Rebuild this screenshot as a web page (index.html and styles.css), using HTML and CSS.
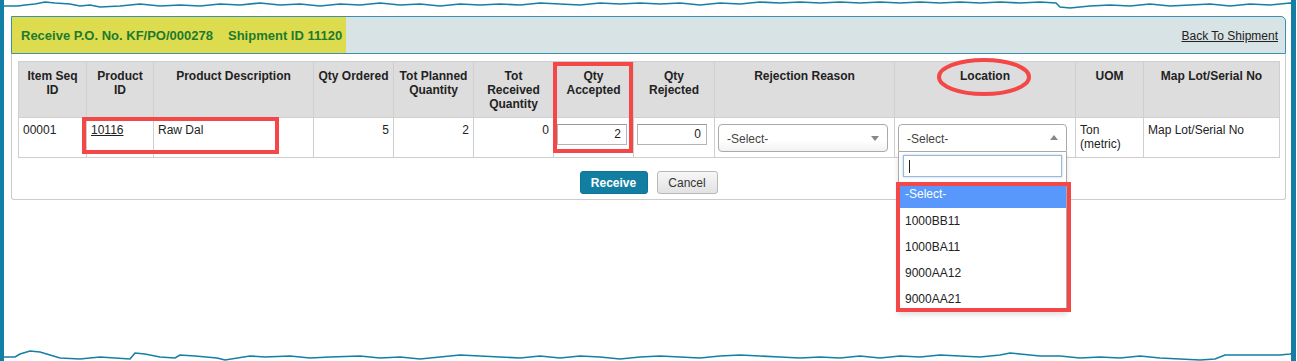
FILE: index.html
```html
<!DOCTYPE html>
<html>
<head>
<meta charset="utf-8">
<title>Receive P.O.</title>
<link rel="stylesheet" href="styles.css">
</head>
<body>
<div class="frame">
  <div class="panel">
    <div class="panel-head">
      <span class="title">Receive P.O. No. KF/PO/000278<span class="gap"></span>Shipment ID 11120</span>
      <a class="back" href="#">Back To Shipment</a>
    </div>
    <div class="panel-body">
      <table class="grid">
        <colgroup>
          <col style="width:68px"><col style="width:67px"><col style="width:160px"><col style="width:80px">
          <col style="width:80px"><col style="width:80px"><col style="width:80px"><col style="width:81px">
          <col style="width:180px"><col style="width:181px"><col style="width:68px"><col style="width:136px">
        </colgroup>
        <thead>
          <tr>
            <th>Item Seq<br>ID</th>
            <th>Product<br>ID</th>
            <th>Product Description</th>
            <th>Qty Ordered</th>
            <th>Tot Planned<br>Quantity</th>
            <th>Tot<br>Received<br>Quantity</th>
            <th>Qty<br>Accepted</th>
            <th>Qty<br>Rejected</th>
            <th>Rejection Reason</th>
            <th>Location</th>
            <th>UOM</th>
            <th>Map Lot/Serial No</th>
          </tr>
        </thead>
        <tbody>
          <tr>
            <td>00001</td>
            <td><a class="pid" href="#">10116</a></td>
            <td>Raw Dal</td>
            <td class="num">5</td>
            <td class="num">2</td>
            <td class="num">0</td>
            <td class="inp"><span class="box">2</span></td>
            <td class="inp"><span class="box">0</span></td>
            <td class="sel"><div class="s2 reject"><span>-Select-</span><i class="arrow down"></i></div></td>
            <td class="sel"><div class="s2 loc open"><span>-Select-</span><i class="arrow up"></i>
              <div class="drop">
                <div class="search"><span class="caret"></span></div>
                <ul class="opts">
                  <li class="hl">-Select-</li>
                  <li>1000BB11</li>
                  <li>1000BA11</li>
                  <li>9000AA12</li>
                  <li>9000AA21</li>
                </ul>
              </div>
            </div></td>
            <td>Ton (metric)</td>
            <td>Map Lot/Serial No</td>
          </tr>
        </tbody>
      </table>
      <div class="actions">
        <button class="btn primary">Receive</button>
        <button class="btn plain">Cancel</button>
      </div>
    </div>
  </div>

  <div class="mark mark-product"></div>
  <div class="mark mark-qty"></div>
  <div class="mark mark-opts"></div>
  <svg class="ring" width="100" height="44" viewBox="0 0 100 44"><ellipse cx="50" cy="22" rx="45" ry="17" fill="none" stroke="#f44848" stroke-width="4"/></svg>

  <svg class="tear tear-top" width="1297" height="14" viewBox="0 0 1297 14">
    <polygon fill="#fff" points="0,0 1297,0 1297,4 1290,3 1270,5 1250,4 1230,6 1210,4 1190,5 1170,6 1150,4 1130,6 1110,5 1090,6 1070,8 1060,7 1056,3 1040,2 1020,3 1000,2 980,3 960,2 940,3 920,2 900,3 880,2 860,3 840,2 820,3 800,2 780,3 760,2 740,4 720,3 700,5 680,3 660,4 640,3 620,4 600,3 580,5 560,4 540,3 520,5 500,4 480,5 460,4 440,6 420,4 400,5 380,3 360,5 340,4 320,6 300,4 280,5 260,3 240,5 220,4 200,6 180,5 160,6 140,4 120,6 100,7 90,5 80,6 70,4 55,3 45,2 35,4 25,5 18,6 0,6"/>
    <polyline fill="none" stroke="#157fa4" stroke-width="1.6" points="0,6 18,6 25,5 35,4 45,2 55,3 70,4 80,6 90,5 100,7 120,6 140,4 160,6 180,5 200,6 220,4 240,5 260,3 280,5 300,4 320,6 340,4 360,5 380,3 400,5 420,4 440,6 460,4 480,5 500,4 520,5 540,3 560,4 580,5 600,3 620,4 640,3 660,4 680,3 700,5 720,3 740,4 760,2 780,3 800,2 820,3 840,2 860,3 880,2 900,3 920,2 940,3 960,2 980,3 1000,2 1020,3 1040,2 1056,3 1060,7 1070,8 1090,6 1110,5 1130,6 1150,4 1170,6 1190,5 1210,4 1230,6 1250,4 1270,5 1290,3 1297,4"/>
  </svg>
  <svg class="tear tear-bot" width="1297" height="14" viewBox="0 347 1297 14">
    <polygon fill="#fff" points="0,361 1297,361 1297,351 1290,354 1280,355 1260,355 1245,355 1225,355 1215,359 1200,360 1180,359 1160,358 1140,356 1120,358 1100,357 1080,358 1060,356 1040,356 1020,354 1010,353 1000,355 980,357 960,356 940,355 920,357 900,356 880,358 860,356 840,358 820,357 800,358 780,357 760,356 740,355 720,356 700,358 680,357 660,356 640,357 620,359 600,357 580,356 560,358 540,356 520,358 500,357 480,356 460,355 440,357 420,359 400,357 380,358 360,356 330,357 310,358 290,356 265,357 250,356 225,360 217,358 195,356 180,355 175,358 160,357 145,354 135,353 130,359 100,357 80,359 60,358 50,355 40,352 30,351 20,354 15,357 0,357"/>
    <polyline fill="none" stroke="#157fa4" stroke-width="1.6" points="0,357 15,357 20,354 30,351 40,352 50,355 60,358 80,359 100,357 130,359 135,353 145,354 160,357 175,358 180,355 195,356 217,358 225,360 250,356 265,357 290,356 310,358 330,357 360,356 380,358 400,357 420,359 440,357 460,355 480,356 500,357 520,358 540,356 560,358 580,356 600,357 620,359 640,357 660,356 680,357 700,358 720,356 740,355 760,356 780,357 800,358 820,357 840,358 860,356 880,358 900,356 920,357 940,355 960,356 980,357 1000,355 1010,353 1020,354 1040,356 1060,356 1080,358 1100,357 1120,358 1140,356 1160,358 1180,359 1200,360 1215,359 1225,355 1245,355 1260,355 1280,355 1290,354 1297,351"/>
  </svg>
</div>
</body>
</html>
```

FILE: styles.css
```css
* { box-sizing: border-box; }
html, body { margin: 0; padding: 0; background: #fff; }
body { font-family: "Liberation Sans", Arial, sans-serif; font-size: 12px; color: #222; }

.frame {
  position: relative;
  width: 1296px;
  height: 361px;
  border-left: 4px solid #137fa6;
  border-right: 5px solid #137fa6;
  padding: 16px 0 0 7px;
  overflow: hidden;
}

.panel { width: 1275px; }

.panel-head {
  height: 38px;
  background: #d8e3e6;
  border: 1px solid #3c90b0;
  border-radius: 0 5px 0 0;
  display: flex;
  align-items: stretch;
  justify-content: space-between;
}
.title {
  display: flex;
  align-items: center;
  background: #dcdc4e;
  color: #1d7a2e;
  font-weight: bold;
  font-size: 13px;
  padding: 1px 4px 0 9px;
}
.gap { display: inline-block; width: 15px; }
.back {
  align-self: center;
  color: #222;
  text-decoration: underline;
  font-size: 12px;
  margin-right: 7px;
  margin-top: 1px;
}

.panel-body {
  border: 1px solid #cccccc;
  border-top: none;
  border-radius: 0 0 3px 3px;
  padding: 7px 6px 5px 6px;
}

.grid {
  width: 1261px;
  table-layout: fixed;
  border-collapse: collapse;
}
.grid th, .grid td { border: 1px solid #cfcfcf; vertical-align: top; }
.grid thead tr { height: 56px; }
.grid th {
  background: #dddddd;
  color: #222;
  font-weight: bold;
  font-size: 12px;
  line-height: 14px;
  padding: 7px 2px 0 2px;
  text-align: center;
}
.grid tbody tr { height: 40px; }
.grid td {
  font-size: 12px;
  line-height: 14px;
  padding: 5px 4px 0 4px;
  color: #222;
}
.grid td.num { text-align: right; }
.pid { color: #222; text-decoration: underline; padding-left: 0; }

.grid td.inp { padding: 6px 4px 0 3px; }
.box {
  display: block;
  width: 70px;
  height: 21px;
  border: 1px solid #b5b5b5;
  border-top-color: #999;
  background: #fff;
  text-align: right;
  padding: 2px 5px 0 0;
  line-height: 15px;
}

.grid td.sel { padding: 6px 0 0 3px; }
.s2 {
  position: relative;
  width: 170px;
  height: 28px;
  border: 1px solid #aaaaaa;
  border-radius: 4px;
  background: linear-gradient(#ffffff 60%, #f2f2f2);
  color: #444;
  padding: 7px 0 0 8px;
  line-height: 14px;
}
.s2.loc { width: 169px; margin-left: 0; border-radius: 4px 4px 0 0; background: #fff; }
.arrow {
  position: absolute;
  right: 8px;
  top: 11px;
  width: 0; height: 0;
  border-left: 4px solid transparent;
  border-right: 4px solid transparent;
}
.arrow.down { border-top: 5px solid #888; }
.arrow.up { border-bottom: 5px solid #888; top: 10px; }

.drop {
  position: absolute;
  left: -1px;
  top: 27px;
  width: 169px;
  height: 160px;
  background: #fff;
  border: 1px solid #aaaaaa;
  border-top: none;
  box-shadow: 0 3px 5px rgba(0,0,0,0.12);
  z-index: 5;
  padding: 3px 0 0 0;
}
.search {
  height: 22px;
  margin: 0 4px 0 4px;
  border: 1px solid #9fb8d8;
  box-shadow: 0 0 2px #9ec3f0;
  background: #fff;
  position: relative;
}
.caret {
  position: absolute;
  left: 5px;
  top: 4px;
  width: 1px;
  height: 13px;
  background: #222;
}
.opts { list-style: none; margin: 5px 0 0 0; padding: 0; }
.opts li {
  height: 26px;
  line-height: 14px;
  padding: 6px 0 0 6px;
  color: #222;
}
.opts li.hl { background: #5897fb; color: #fff; padding-top: 5px; }

.actions {
  display: flex;
  justify-content: center;
  gap: 9px;
  margin-top: 13px;
}
.btn {
  height: 23px;
  font-family: "Liberation Sans", Arial, sans-serif;
  font-size: 12px;
  border-radius: 3px;
  padding: 0;
  cursor: pointer;
}
.btn.primary {
  width: 68px;
  background: #127fa2;
  border: 1px solid #0f7597;
  color: #fff;
  font-weight: bold;
}
.btn.plain {
  width: 61px;
  background: linear-gradient(#f7f7f7, #e2e2e2);
  border: 1px solid #b8b8b8;
  color: #333;
}

.mark {
  position: absolute;
  border: 4px solid #f44848;
  z-index: 10;
}
.mark-product { left: 78px; top: 117px; width: 197px; height: 37px; }
.mark-qty { left: 549px; top: 62px; width: 80px; height: 91px; }
.mark-opts { left: 892px; top: 182px; width: 175px; height: 130px; }
.ring { position: absolute; left: 930px; top: 55px; z-index: 10; }

.tear { position: absolute; left: -4px; z-index: 20; }
.tear-top { top: 0; }
.tear-bot { top: 347px; }
```
